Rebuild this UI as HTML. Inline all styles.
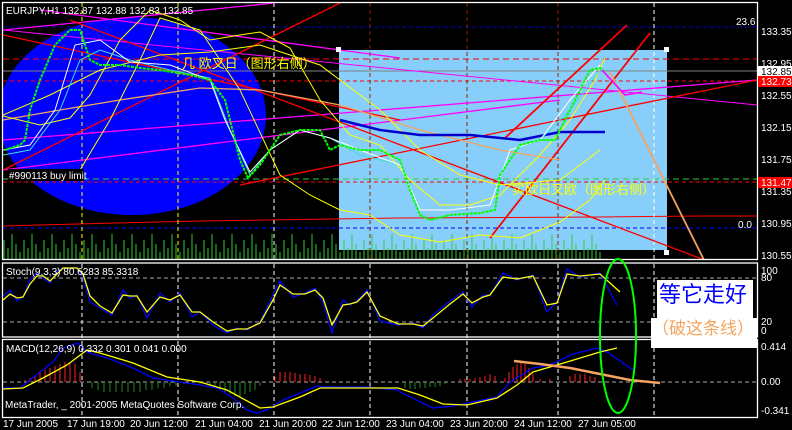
<!DOCTYPE html>
<html><head><meta charset="utf-8"><style>
html,body{margin:0;padding:0;background:#000;width:792px;height:430px;overflow:hidden}
svg{display:block}
text{font-family:"Liberation Sans","Noto Sans CJK SC",sans-serif}
</style></head><body>
<svg width="792" height="430" viewBox="0 0 792 430" xmlns="http://www.w3.org/2000/svg">
<defs>
<pattern id="vol" x="3" y="228" width="20" height="31" patternUnits="userSpaceOnUse">
<line x1="1" y1="12" x2="1" y2="31" stroke="#32cd32"/>
<line x1="5" y1="20" x2="5" y2="31" stroke="#32cd32"/>
<line x1="9" y1="6" x2="9" y2="31" stroke="#32cd32"/>
<line x1="13" y1="16" x2="13" y2="31" stroke="#32cd32"/>
<line x1="17" y1="24" x2="17" y2="31" stroke="#32cd32"/>
</pattern>
<clipPath id="mainc"><rect x="3" y="3" width="754" height="256"/></clipPath>
</defs>
<rect width="792" height="430" fill="#000"/>
<g clip-path="url(#mainc)">
<ellipse cx="132" cy="116" rx="134" ry="99" fill="#0000ff"/>
<rect x="339" y="50" width="328" height="200" fill="#87cefa"/>
<rect x="3" y="228" width="600" height="31" fill="url(#vol)"/>
<line x1="3" y1="27" x2="757" y2="27" stroke="#0000cc" stroke-dasharray="4,3"/>
<line x1="3" y1="59" x2="757" y2="59" stroke="#ff0000" stroke-dasharray="6,4"/>
<line x1="3" y1="71" x2="757" y2="71" stroke="#808080"/>
<line x1="3" y1="81" x2="757" y2="81" stroke="#ff0000" stroke-dasharray="4,3"/>
<line x1="3" y1="179" x2="757" y2="179" stroke="#32cd32" stroke-dasharray="6,4"/>
<line x1="3" y1="182" x2="757" y2="182" stroke="#ff0000" stroke-dasharray="4,3"/>
<line x1="3" y1="228" x2="757" y2="228" stroke="#0000ff" stroke-dasharray="4,3"/>
<polyline points="3,226 40,225 115,223 200,221 270,220 400,218 600,217 700,216 757,216" fill="none" stroke="#ff0000"/>
<g stroke-dasharray="4,3">
<line x1="82" y1="3" x2="82" y2="259" stroke="#ffff00"/>
<line x1="178" y1="3" x2="178" y2="259" stroke="#ffff00"/>
<line x1="274" y1="3" x2="274" y2="259" stroke="#fff"/>
<line x1="370" y1="3" x2="370" y2="259" stroke="#8b2500"/>
<line x1="467" y1="3" x2="467" y2="259" stroke="#8b2500"/>
<line x1="558" y1="3" x2="558" y2="259" stroke="#8b2500"/>
<line x1="654" y1="3" x2="654" y2="259" stroke="#fff"/>
</g>
<g fill="none" stroke-width="1.3">
<line x1="3" y1="30" x2="275" y2="3" stroke="#ff00ff"/>
<line x1="3" y1="30" x2="757" y2="105" stroke="#ff00ff" stroke-width="1"/>
<line x1="3" y1="140" x2="757" y2="80" stroke="#ff00ff"/>
<line x1="3" y1="170" x2="560" y2="100" stroke="#ff00ff"/>
<line x1="40" y1="10" x2="400" y2="58" stroke="#ff00ff"/>
<line x1="70" y1="20" x2="710" y2="262" stroke="#ff0000"/>
<line x1="3" y1="170" x2="340" y2="3" stroke="#ff0000"/>
<line x1="240" y1="185" x2="757" y2="80" stroke="#ff0000"/>
<line x1="3" y1="35" x2="400" y2="120" stroke="#ff0000"/>
<line x1="505" y1="138" x2="627" y2="25" stroke="#ff0000" stroke-width="1.8"/>
<line x1="490" y1="238" x2="650" y2="33" stroke="#ff0000" stroke-width="1.8"/>
<line x1="610" y1="72" x2="705" y2="262" stroke="#f4a460" stroke-width="1.8"/>
<polyline points="3,120 60,110 120,100 200,88 260,90 340,105 420,130 500,150 560,160" stroke="#f4a460"/>
<polyline points="3,115 50,95 100,70 160,55 210,52 260,45 320,65 380,110 420,150 460,175 500,185 560,180 600,150" stroke="#ffff00" stroke-width="1"/>
<polyline points="3,116 40,125 70,118 90,95 120,40 150,10 180,20 210,40 240,35 260,32 290,48 320,100 350,135 380,145 410,180 440,205 470,205 500,195 540,155 570,120 595,80 605,58" stroke="#ffff00" stroke-width="1"/>
<polyline points="50,170 80,170 110,120 140,60 160,18 200,30 240,90 280,175 310,195 340,210 370,215 400,235 440,242 480,235 520,238 560,222 590,200 605,180" stroke="#ffff00" stroke-width="1"/>
<polyline points="340,120 380,130 420,135 470,135 520,140 560,132 605,132" stroke="#0000cd" stroke-width="2.5"/>
<polyline points="3,155 30,150 60,110 80,60 100,50 130,60 170,70 210,78 230,130 250,175 270,150 300,130 330,138 360,155 400,165 420,210 450,210 490,205 510,150 540,140 570,110 600,70" stroke="#40e0d0" stroke-width="1"/>
<polyline points="3,150 30,145 55,110 75,45 100,40 130,62 170,65 210,80 225,120 250,172 270,150 300,130 330,138 360,150 400,165 420,210 450,210 490,205 510,150 540,140 570,100 600,65" stroke="#fff" stroke-width="1"/>
<polyline points="5,150 20,145 25,140 30,110 40,80 55,45 70,30 80,30 90,60 100,65 120,65 140,68 160,70 190,75 210,80 225,100 240,160 248,178 260,165 280,135 300,130 320,130 330,150 340,145 360,150 380,150 400,160 410,190 420,215 430,220 450,215 480,213 495,210 500,175 510,160 520,145 540,140 555,140 565,120 575,100 590,70 600,68 605,72" stroke="#00ff00" stroke-width="2" stroke-dasharray="3,1"/>
<polyline points="602,70 625,95 642,92" stroke="#ff00ff" stroke-width="1.6"/>
</g>
<rect x="8" y="169" width="76" height="12" fill="#000"/>
<text x="9" y="179" font-size="10" fill="#fff">#990113 buy limit</text>
<text x="182" y="68" font-size="13" fill="#ffff00">几 欧叉日（图形右侧）</text>
<text x="512" y="194" font-size="13" fill="#ffff00">实欧日叉欧（图形右侧）</text>
<text x="6" y="14" font-size="10" fill="#fff">EURJPY,H1  132.87 132.88 132.83 132.85</text>
<text x="736" y="25" font-size="10" fill="#fff">23.6</text>
<text x="738" y="228" font-size="10" fill="#fff">0.0</text>
<rect x="336" y="47" width="5" height="5" fill="#fff"/>
<rect x="664" y="47" width="5" height="5" fill="#fff"/>
<rect x="664" y="250" width="5" height="5" fill="#fff"/>
</g>
<g fill="none" stroke="#fff" stroke-width="1.3">
<rect x="2.5" y="2.5" width="755" height="257"/>
<rect x="2.5" y="263" width="755" height="74"/>
<rect x="2.5" y="339.5" width="755" height="78"/>
</g>
<g fill="none">
<line x1="3" y1="278" x2="757" y2="278" stroke="#aaa" stroke-dasharray="4,3"/>
<line x1="3" y1="322" x2="757" y2="322" stroke="#aaa" stroke-dasharray="4,3"/>
<g stroke="#fff" stroke-dasharray="4,3">
<line x1="82" y1="264" x2="82" y2="417"/><line x1="178" y1="264" x2="178" y2="417"/><line x1="274" y1="264" x2="274" y2="417"/><line x1="370" y1="264" x2="370" y2="417"/><line x1="467" y1="264" x2="467" y2="417"/><line x1="558" y1="264" x2="558" y2="417"/><line x1="654" y1="264" x2="654" y2="417"/>
</g>
<polyline points="3,297 10,290 17,301 23,297 30,280 37,273 43,278 50,283 57,271 63,268 77,268 83,277 90,302 100,308 112,315 123,290 130,298 137,295 147,318 160,293 170,302 180,293 192,317 200,312 213,325 227,333 237,328 247,330 260,322 273,295 280,281 293,297 305,293 315,288 323,302 332,333 343,300 350,305 357,301 367,290 380,321 398,325 413,323 423,328 433,315 450,301 463,292 472,307 483,295 490,295 503,273 517,280 533,275 547,312 557,302 567,269 580,277 600,273 617,305" stroke="#0000ff" stroke-width="1.3"/>
<polyline points="3,300 10,294 17,298 23,297 30,284 37,276 43,276 50,281 57,274 63,268 77,268 83,274 90,296 100,306 112,313 123,295 130,296 137,296 147,312 160,297 170,300 180,295 192,312 200,312 213,322 227,331 237,329 247,329 260,323 273,300 280,285 293,294 305,294 315,290 323,298 332,325 343,305 350,304 357,302 367,292 380,316 398,324 413,324 423,326 433,318 450,304 463,294 472,303 483,297 490,295 503,277 517,279 533,276 547,305 557,303 567,274 580,276 600,274 620,292" stroke="#ffff00" stroke-width="1.3"/>
</g>
<g fill="none">
<line x1="3" y1="382" x2="757" y2="382" stroke="#aaa" stroke-dasharray="4,3"/>
<g stroke="#ff2020" stroke-width="1">
<path d="M25,382v-2M30,382v-4M35,382v-6M40,382v-10M45,382v-12M50,382v-14M55,382v-16M60,382v-18M65,382v-20M70,382v-20M75,382v-18M80,382v-10M275,382v-5M280,382v-10M285,382v-10M290,382v-10M295,382v-9M300,382v-8M305,382v-8M310,382v-7M315,382v-6M320,382v-4M460,382v-3M465,382v-3M470,382v-3M475,382v-4M480,382v-5M485,382v-6M490,382v-8M495,382v-6M505,382v-4M509,382v-10M513,382v-15M517,382v-18M521,382v-20M525,382v-18M529,382v-14M533,382v-8M540,382v-3M550,382v-3M570,382v-6M575,382v-8M580,382v-8M585,382v-8M590,382v-6M595,382v-5"/>
</g>
<g stroke="#228b22" stroke-width="1">
<path d="M92,382v6M98,382v8M104,382v10M110,382v10M116,382v10M122,382v10M128,382v10M134,382v10M140,382v10M146,382v8M152,382v8M158,382v6M164,382v6M170,382v4M176,382v4M184,382v2M200,382v2M210,382v4M215,382v6M220,382v8M225,382v10M230,382v12M235,382v14M240,382v14M245,382v12M250,382v10M255,382v8M260,382v4M405,382v6M410,382v7M415,382v7M420,382v6M425,382v6M430,382v5M435,382v5M440,382v4M445,382v2"/>
</g>
<polyline points="3,388 20,388 40,372 53,362 63,348 78,343 87,352 107,358 133,368 153,378 173,381 200,385 217,388 233,398 247,410 257,413 267,410 283,400 300,393 317,386 327,387 367,387 398,390 400,392 433,408 453,406 497,397 510,382 533,368 550,365 573,354 597,348 607,352 633,370" stroke="#0000ff" stroke-width="1.3"/>
<polyline points="3,389 23,388 43,378 67,365 87,350 100,353 133,363 167,377 200,382 227,390 260,408 273,407 300,397 320,388 367,388 398,388 420,395 443,404 467,405 497,398 517,385 533,372 567,362 600,352 617,348" stroke="#ffff00" stroke-width="1.3"/>
<polyline points="514,361 540,364 570,368 600,374 630,380 660,383" stroke="#f4a460" stroke-width="2.5"/>
</g>
<text x="6" y="275" font-size="10" fill="#fff">Stoch(9,3,3) 80.6283 85.3318</text>
<text x="6" y="352" font-size="10" fill="#fff">MACD(12,26,9) 0.332 0.301 0.041 0.000</text>
<text x="5" y="408" font-size="10" fill="#fff">MetaTrader, _ 2001-2005 MetaQuotes Software Corp.</text>
<ellipse cx="618" cy="336" rx="18" ry="77" fill="none" stroke="#00ff00" stroke-width="2"/>
<rect x="657" y="280" width="96" height="40" fill="#fff"/>
<rect x="651" y="318" width="106" height="30" fill="#fff"/>
<text x="659" y="302" font-size="22" fill="#0000ff" font-family="Noto Sans CJK SC">等它走好</text>
<text x="652" y="334" font-size="17" fill="#f4a460" font-family="Noto Sans CJK SC">（破这条线）</text>
<g font-size="10" fill="#fff">
<text x="761" y="35">133.35</text>
<text x="761" y="67">132.95</text>
<rect x="758" y="66" width="34" height="11" fill="#fff"/>
<text x="761" y="75" fill="#000">132.85</text>
<rect x="758" y="76" width="34" height="11" fill="#ff0000"/>
<text x="761" y="85">132.73</text>
<text x="761" y="99">132.55</text>
<text x="761" y="131">132.15</text>
<text x="761" y="163">131.75</text>
<rect x="758" y="177" width="34" height="11" fill="#ff0000"/>
<text x="761" y="186">131.47</text>
<text x="761" y="195">131.35</text>
<text x="761" y="227">130.95</text>
<text x="761" y="259">130.55</text>
<text x="761" y="274">100</text>
<text x="761" y="281">80</text>
<text x="761" y="325">20</text>
<text x="761" y="334">0</text>
<text x="761" y="350">0.414</text>
<text x="761" y="385">0.00</text>
<text x="761" y="414">-0.341</text>
</g>
<g font-size="10" fill="#fff">
<text x="3" y="427">17 Jun 2005</text>
<text x="67" y="427">17 Jun 19:00</text>
<text x="130" y="427">20 Jun 12:00</text>
<text x="195" y="427">21 Jun 04:00</text>
<text x="259" y="427">21 Jun 20:00</text>
<text x="322" y="427">22 Jun 12:00</text>
<text x="386" y="427">23 Jun 04:00</text>
<text x="450" y="427">23 Jun 20:00</text>
<text x="514" y="427">24 Jun 12:00</text>
<text x="578" y="427">27 Jun 05:00</text>
</g>
</svg>
</body></html>
